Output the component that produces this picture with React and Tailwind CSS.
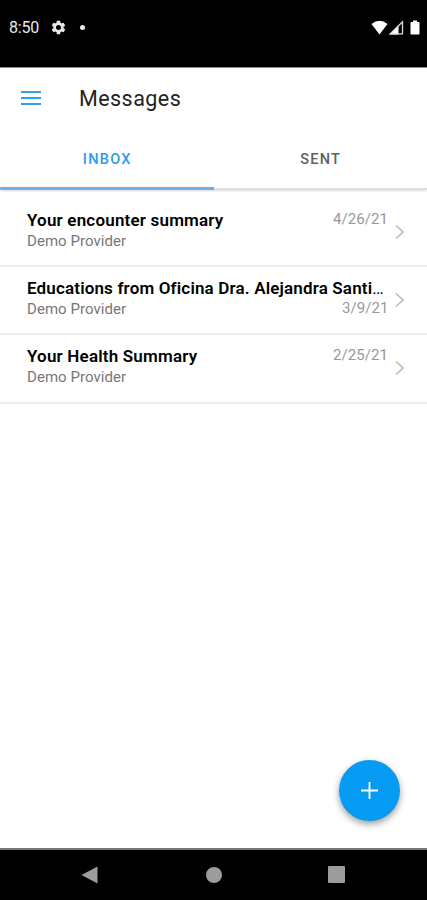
import { MdSettings } from "react-icons/md";

const messages = [
  { id: 1, title: "Your encounter summary", from: "Demo Provider", date: "4/26/21" },
  {
    id: 2,
    title: "Educations from Oficina Dra. Alejandra Santi",
    cut: true,
    from: "Demo Provider",
    date: "3/9/21",
  },
  { id: 3, title: "Your Health Summary", from: "Demo Provider", date: "2/25/21" },
];

function StatusBar() {
  return (
    <div className="h-[68px] shrink-0 bg-black border-b border-[#8a8a8a] text-[#e8e8e8] flex items-start justify-between pl-[9px] pr-[7px]">
      <div className="flex items-center h-4 mt-5">
        <span className="text-[16px] leading-4 tracking-[-0.2px] w-[41px]">8:50</span>
        <MdSettings size={17} className="-mt-[2px]" />
        <span className="w-[5px] h-[5px] rounded-full bg-[#e8e8e8] ml-[13px] -mt-[2px]" />
      </div>
      <div className="flex items-center h-4 mt-[19px]">
        <svg width="17" height="15" viewBox="0 0 17 15" fill="#fff">
          <path d="M0.5 4 Q8.500 -2.500 16.500 4 L8.500 14.500 Z" />
        </svg>
        <svg className="ml-[1px]" width="15" height="15" viewBox="0 0 15 15">
          <path d="M0 14.500 L9.500 5 V14.500 Z" fill="#fff" />
          <path d="M1.500 13.800 L13.500 1.800 V13.800 Z" fill="none" stroke="#ddd" strokeWidth="1.300" />
        </svg>
        <svg className="ml-[6px]" width="10" height="15" viewBox="0 0 10 15" fill="#fff">
          <path d="M3 0.500 H7 V2 H8.800 Q9.500 2 9.500 2.800 V13.800 Q9.500 14.500 8.800 14.500 H1.200 Q0.500 14.500 0.500 13.800 V2.800 Q0.500 2 1.200 2 H3 Z" />
        </svg>
      </div>
    </div>
  );
}

function MessageRow({ message }) {
  return (
    <li className="h-[68.300px] border-b-2 border-[#eeeeee] flex items-start pl-[27px] pr-[22px]">
      <div className={message.cut ? "w-[358px] shrink-0" : "flex-1"}>
        <p
          className={`text-[17px] leading-[21px] mt-[11px] font-semibold text-black whitespace-nowrap ${
            message.cut ? "tracking-[0.155px]" : "tracking-[0.190px]"
          }`}
        >
          {message.title}
          {message.cut && <span className="font-normal">…</span>}
        </p>
        <p className="text-[15px] leading-[21px] tracking-[0.050px] text-[#777777]">{message.from}</p>
      </div>
      <span
        className={`text-[15px] leading-[20px] tracking-[0.050px] text-[#999999] ${
          message.cut ? "-ml-[43px] mt-[31px]" : "mt-[10px] mr-[7px]"
        }`}
      >
        {message.date}
      </span>
      <svg className="ml-auto mt-[25px] shrink-0" width="10" height="16" viewBox="0 0 10 16">
        <path d="M1 1.500 L8 8 L1 14.500" fill="none" stroke="#b8b8b8" strokeWidth="1.600" />
      </svg>
    </li>
  );
}

export default function App() {
  return (
    <div className="w-full h-[900px] flex flex-col bg-white overflow-hidden font-['Roboto',sans-serif]">
      <StatusBar />

      {/* Toolbar */}
      <header className="h-[60px] shrink-0 flex items-center pl-[21px]">
        <button className="w-5 mr-[38px] flex flex-col gap-1">
          <span className="h-[2px] w-5 bg-[#2f9df0]" />
          <span className="h-[2px] w-5 bg-[#2f9df0]" />
          <span className="h-[2px] w-5 bg-[#2f9df0]" />
        </button>
        <h1 className="text-[21.500px] leading-[26px] tracking-[0.450px] mt-px text-[#222222]">Messages</h1>
      </header>

      {/* Tabs */}
      <div className="h-[62px] shrink-0 flex text-[14.500px] font-medium tracking-[1.250px] text-center leading-[63px] shadow-[0_2px_2px_-1px_rgba(0,0,0,0.150)]">
        <div className="w-1/2 pl-px text-[#2a9bed] border-b-[3px] border-[#72aee8]">INBOX</div>
        <div className="w-1/2 pl-px text-[#606060] border-b-2 border-[#e0e0e0]">SENT</div>
      </div>

      <ul className="mt-[8.700px] flex-1">
        {messages.map((m) => (
          <MessageRow key={m.id} message={m} />
        ))}
      </ul>

      {/* Compose */}
      <button className="self-end mr-[27px] mb-[27px] w-[61px] h-[61px] shrink-0 rounded-full bg-[#069bf3] flex items-center justify-center shadow-[0_3px_7px_rgba(0,0,0,0.400)]">
        <svg width="17" height="17" viewBox="0 0 17 17">
          <path d="M8.500 0 V17 M0 8.500 H17" stroke="#fff" strokeWidth="1.800" />
        </svg>
      </button>

      {/* Android navigation */}
      <nav className="h-[52px] shrink-0 bg-black border-t-2 border-[#777777] flex items-center pl-[81px]">
        <svg className="-mt-px" width="17" height="18" viewBox="0 0 17 18">
          <path d="M0.500 9 L16.500 0.500 V17.500 Z" fill="#9c9c9c" />
        </svg>
        <span className="w-4 h-4 rounded-full bg-[#9c9c9c] ml-[108px] -mt-px" />
        <span className="w-[17px] h-[17px] rounded-[1px] bg-[#9c9c9c] ml-[106px] -mt-px" />
      </nav>
    </div>
  );
}
